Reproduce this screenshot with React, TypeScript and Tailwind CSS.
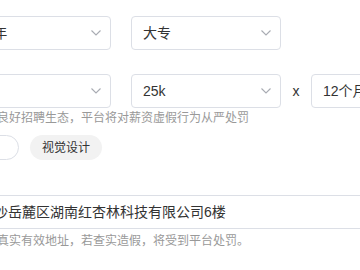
// job form fragment: experience / education / salary / tags / address
const FONT = { fontFamily: '"Liberation Sans", "Noto Sans CJK SC", sans-serif' };

function Chevron() {
  return (
    <svg width="10" height="6" viewBox="0 0 10 6" className="shrink-0">
      <path d="M0.5 0.5 L5 5 L9.5 0.5" fill="none" stroke="#a8abb2" strokeWidth="1.1" />
    </svg>
  );
}

// fake select box, same look as element's el-select
function Select({ value, arrow = true }: { value: string; arrow?: boolean }) {
  return (
    <div className="flex h-[34px] w-[150px] shrink-0 items-center justify-between rounded-[4px] border border-[#dcdfe6] bg-white pl-[11px] pr-[9px] text-[14px] text-[#333]">
      <span>{value}</span>
      {arrow && <Chevron />}
    </div>
  );
}

export default function App() {
  return (
    <div className="h-[270px] w-[360px] overflow-hidden bg-white" style={FONT}>
      <div className="ml-[-39px] w-[520px] pt-4">
        {/* experience + education */}
        <div className="flex items-center gap-5">
          <Select value="1-3年" />
          <Select value="大专" />
        </div>

        {/* salary range */}
        <div className="mt-6 flex items-center gap-5">
          <Select value="20k" />
          <div className="flex items-center">
            <Select value="25k" />
            <span className="w-[30px] text-center text-[14px] text-[#333]">x</span>
            <Select value="12个月" />
          </div>
        </div>
        <p className="mt-[2px] text-[12px] leading-[17px] text-[#999]">
          为维护良好招聘生态，平台将对薪资虚假行为从严处罚
        </p>

        {/* tags */}
        <div className="mt-2 flex items-center gap-[11px]">
          <span className="flex h-[25px] w-[58px] items-center rounded-full border border-[#dcdfe6] px-3 text-[12px] text-[#333]">
            品牌
          </span>
          <span className="flex h-[25px] items-center rounded-full bg-[#f2f2f2] px-3 text-[12px] text-[#333]">
            视觉设计
          </span>
        </div>

        {/* address */}
        <div className="mt-[35px] flex h-[34px] w-[520px] items-center rounded-[4px] border border-[#dcdfe6] pl-[18px] text-[14px] text-[#333]">
          长沙岳麓区湖南红杏林科技有限公司6楼
        </div>
        <p className="mt-1 text-[12px] leading-[17px] text-[#999]">
          请填写真实有效地址，若查实造假，将受到平台处罚。
        </p>
      </div>
    </div>
  );
}
